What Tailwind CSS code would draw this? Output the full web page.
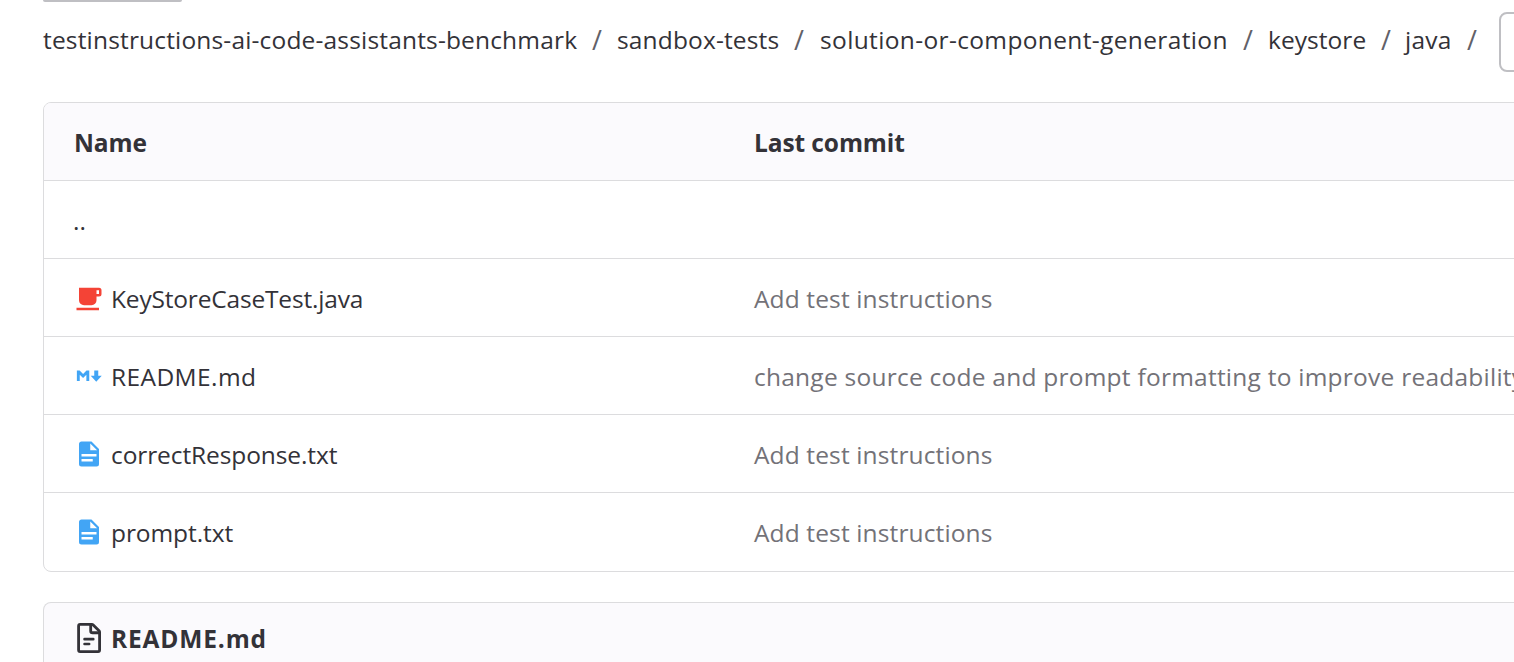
<!DOCTYPE html>
<html lang="en">
<head>
<meta charset="utf-8">
<title>java</title>
<script src="https://cdn.jsdelivr.net/npm/@tailwindcss/browser@4"></script>
</head>
<body class="h-[662px] overflow-hidden bg-white font-['Open_Sans','Noto_Sans',sans-serif] text-[24.5px] leading-[30px] text-[#333238] whitespace-nowrap">
<div class="ml-[43px] h-0.5 w-[139px] rounded-b-[6px] border-b-2 border-[#bfbfc3] bg-[#ececef]"></div>
<nav class="mt-[10px] flex h-[60px] items-center pl-[43px]">
  <div class="flex w-[574px] shrink-0 pb-[4px]"><a class="w-[549px] tracking-[0.17px]">testinstructions-ai-code-assistants-benchmark</a><span class="text-[27px] text-[#626168]">/</span></div>
  <div class="flex w-[203px] shrink-0 pb-[4px]"><a class="w-[177px] tracking-[0.15px]">sandbox-tests</a><span class="text-[27px] text-[#626168]">/</span></div>
  <div class="flex w-[448px] shrink-0 pb-[4px]"><a class="w-[423px] tracking-[0.36px]">solution-or-component-generation</a><span class="text-[27px] text-[#626168]">/</span></div>
  <div class="flex w-[137px] shrink-0 pb-[4px]"><a class="w-[113px] tracking-[0.05px]">keystore</a><span class="text-[27px] text-[#626168]">/</span></div>
  <div class="flex w-[94px] shrink-0 pb-[4px]"><a class="w-[62px] tracking-[0.2px]">java</a><span class="text-[27px] text-[#626168]">/</span></div>
  <div class="h-[60px] w-20 shrink-0 rounded-lg border-2 border-[#bfbfc3] bg-white"></div>
</nav>

<main class="mt-[30px] ml-[43px] w-[1600px]">
  <section class="overflow-hidden rounded-lg border border-[#dcdcde]">
    <div class="flex h-[78px] items-center border-b border-[#dcdcde] bg-[#fbfafd] pl-[30px] pt-[3px] font-bold">
      <span class="w-[680px] tracking-[-0.1px]">Name</span><span class="tracking-[-0.1px]">Last commit</span>
    </div>
    <div class="flex h-[78px] items-center border-b border-[#dcdcde] pl-[29px] pt-[3px]">..</div>
    <div class="flex h-[78px] items-center border-b border-[#dcdcde] pl-[30px] pt-[3px]">
      <svg class="mr-[7px] size-[30px]" viewBox="0 0 24 24" fill="#f44336"><path d="M2 21h18v-2H2M20 8h-2V5h2m0-2H4v10a4 4 0 0 0 4 4h6a4 4 0 0 0 4-4v-3h2a2 2 0 0 0 2-2V5a2 2 0 0 0-2-2z"/></svg>
      <span class="w-[643px] tracking-[-0.18px]">KeyStoreCaseTest.java</span><span class="tracking-[0.13px] text-[#737278]">Add test instructions</span>
    </div>
    <div class="flex h-[78px] items-center border-b border-[#dcdcde] pl-[30px] pt-[3px]">
      <svg class="mr-[7px] mb-[2px] size-[30px]" viewBox="0 0 24 24" fill="#42a5f5"><path d="M2.300 16V7.500h2.200l2.750 2.900L10 7.500h2.200V16H9.900v-5.100L7.250 13.600 4.600 10.900V16zM16.200 7.500h3.200v4.200h2.800l-4.400 4.800-4.400-4.800h2.800z"/></svg>
      <span class="w-[643px] tracking-[0.4px]">README.md</span><span class="tracking-[0.24px] text-[#737278]">change source code and prompt formatting to improve readability</span>
    </div>
    <div class="flex h-[78px] items-center border-b border-[#dcdcde] pl-[30px] pt-[3px]">
      <svg class="mr-[7px] mb-[2px] size-[30px]" viewBox="0 0 24 24" fill="#42a5f5"><path d="M13 9h5.500L13 3.500V9M6 2h8l6 6v12a2 2 0 0 1-2 2H6a2 2 0 0 1-2-2V4c0-1.110.890-2 2-2m9 16v-2H6v2h9m3-4v-2H6v2h12z"/></svg>
      <span class="w-[643px] tracking-[-0.1px]">correctResponse.txt</span><span class="tracking-[0.13px] text-[#737278]">Add test instructions</span>
    </div>
    <div class="flex h-[78px] items-center pl-[30px] pt-[2px]">
      <svg class="mr-[7px] mb-[2px] size-[30px]" viewBox="0 0 24 24" fill="#42a5f5"><path d="M13 9h5.500L13 3.500V9M6 2h8l6 6v12a2 2 0 0 1-2 2H6a2 2 0 0 1-2-2V4c0-1.110.890-2 2-2m9 16v-2H6v2h9m3-4v-2H6v2h12z"/></svg>
      <span class="w-[643px] tracking-[-0.08px]">prompt.txt</span><span class="tracking-[0.13px] text-[#737278]">Add test instructions</span>
    </div>
  </section>
  <section class="mt-[30px] h-[60px] rounded-t-lg border border-b-0 border-[#dcdcde] bg-[#fbfafd]">
    <div class="flex h-[72px] items-center pl-[30px]">
      <svg class="mr-[7px] mb-[2px] size-[30px]" viewBox="0 0 16 16" fill="none" stroke="#333238" stroke-width="1.500"><path d="M3.250.750h6.300a1 1 0 0 1 .7.300l3.100 3.100a1 1 0 0 1 .3.700v9.600a.8.800 0 0 1-.8.800H3.250a.8.800 0 0 1-.8-.8V1.550a.8.800 0 0 1 .8-.8z"/><path d="M8.900.900v3.300a1 1 0 0 0 1 1h3.600"/><path d="M5.600 8.600h4.700M5.600 11.200h2.500" stroke-width="1.350" stroke-linecap="round"/></svg>
      <span class="font-bold tracking-[0.85px]">README.md</span>
    </div>
  </section>
</main>
</body>
</html>
